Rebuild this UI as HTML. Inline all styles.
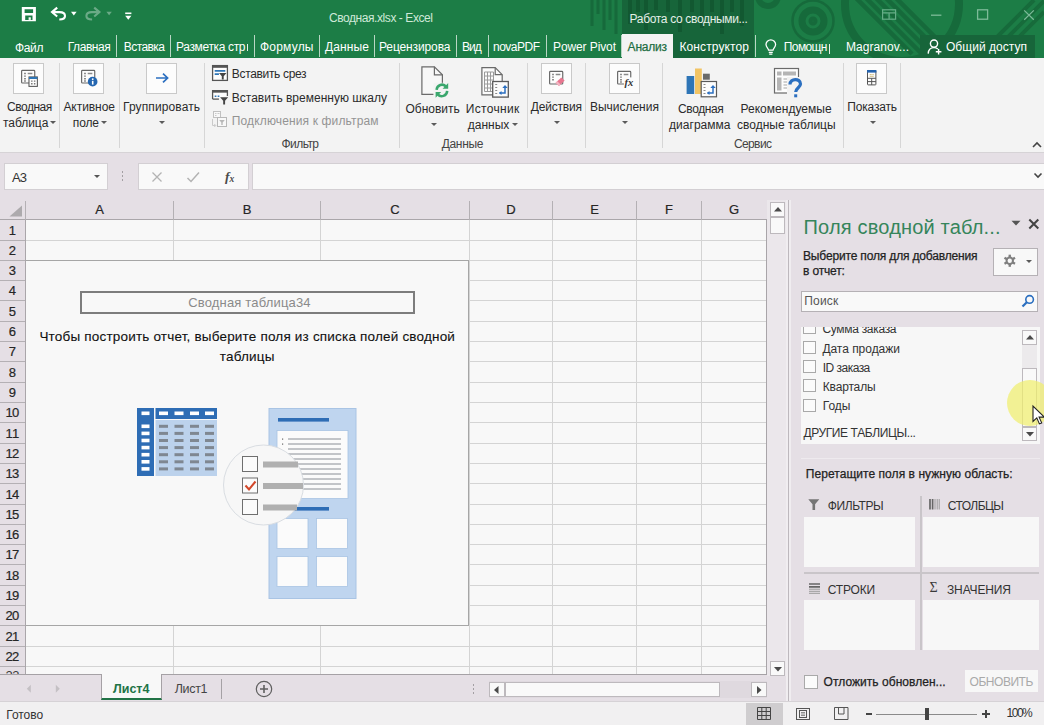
<!DOCTYPE html>
<html lang="ru">
<head>
<meta charset="utf-8">
<title>Сводная.xlsx - Excel</title>
<style>
html,body{margin:0;padding:0;}
body{width:1044px;height:725px;position:relative;overflow:hidden;background:#e5dfe5;font-family:"Liberation Sans",sans-serif;font-size:12px;color:#2b2b2b;}
div,span{box-sizing:border-box;}
.a{position:absolute;}
svg{position:absolute;overflow:visible;}
.t{position:absolute;white-space:nowrap;}
/* title + tabs */
#title{left:0;top:0;width:1044px;height:58px;background:#1c7d46;overflow:hidden;}
#ctx{left:622px;top:0;width:132px;height:58px;background:#17653a;}
#share{left:920px;top:35px;width:115px;height:23px;background:#17653a;}
#tabAct{left:622px;top:34px;width:51px;height:25px;background:#f3f3f3;}
.sep{position:absolute;top:35px;width:1px;height:22px;background:#b9d6c4;}
/* ribbon */
#ribbon{left:0;top:58px;width:1044px;height:94px;background:#f3f3f3;}
#ribline{left:0;top:152px;width:1044px;height:1px;background:#d6d3d6;}
.gsep{position:absolute;top:63px;width:1px;height:85px;background:#d6d6d6;}
.bb{position:absolute;top:63px;width:31px;height:31px;border:1px solid #c9c9c9;background:#fcfcfc;}
.car{position:absolute;width:0;height:0;border-left:3px solid transparent;border-right:3px solid transparent;border-top:3px solid #5a5a5a;}
/* formula bar */
.box{position:absolute;background:#f9f9f9;border:1px solid #d3cfd3;}
/* grid */
#grid{left:0;top:200px;width:767px;height:475px;background:#f8f8f8;overflow:hidden;}
#colhdr{left:0;top:0;width:767px;height:20px;background:#e5dfe5;border-bottom:1px solid #aaa6aa;}
#rowhdr{left:0;top:20px;width:26px;height:460px;background:#e5dfe5;border-right:1px solid #aaa6aa;}
.vl{position:absolute;top:20px;width:1px;height:460px;background:#d4d4d4;}
.hl{position:absolute;left:26px;height:1px;width:742px;background:#d4d4d4;}
.rl{position:absolute;left:0;height:1px;width:25px;background:#b4b0b4;}
.cl{position:absolute;top:1px;width:1px;height:19px;background:#b4b0b4;}
#pv{left:26px;top:60px;width:443px;height:366px;background:#f8f8f8;border:1px solid #a6a6a6;border-left:none;}
/* pane */
.wb{position:absolute;background:#f7f7f7;}
.cb{position:absolute;width:13px;height:13px;border:1px solid #a9a9a9;background:#fbfbfb;}
.sbtn{position:absolute;background:#f9f9f9;border:1px solid #bdb9bd;}
</style>
</head>
<body>
<!-- ================= TITLE BAR ================= -->
<div id="title" class="a">
  <svg width="1044" height="58" viewBox="0 0 1044 58" style="left:0;top:0">
    <defs><clipPath id="bigc"><circle cx="902" cy="4" r="53"/></clipPath></defs>
    <g fill="none" stroke="#16673a" opacity="0.850">
      <path d="M592 0V26M598 0V14M604 0V30M610 0V20M616 0V34" stroke-width="3"/>
      <circle cx="813" cy="21" r="20.500" stroke-width="2.500"/>
      <circle cx="813" cy="21" r="11" stroke-width="7"/>
      <circle cx="813" cy="21" r="2.500" stroke-width="4"/>
      <circle cx="902" cy="4" r="57" stroke-width="8"/>
      <g clip-path="url(#bigc)" stroke-width="4.500">
        <path d="M852 -6L912 54M862 -6L922 54M872 -6L932 54M882 -6L942 54M892 -6L952 54"/>
      </g>
      <path d="M990 44L1034 0M999 46L1044 1M1008 48L1044 12" stroke-width="4"/>
      <circle cx="768" cy="-4" r="10" stroke-width="6"/>
    </g>
  </svg>
</div>
<div id="ctx" class="a"><svg width="132" height="58" viewBox="0 0 132 58" style="left:0;top:0"><g stroke="#125530" stroke-width="4" opacity="0.800"><path d="M8 0V24M16 0V12M24 0V30M34 0V10M46 0V12M58 0V32M70 0V12M80 0V28M90 0V12M100 0V34M110 0V12M120 0V26"/></g></svg></div>
<div id="share" class="a"></div>
<div id="tabAct" class="a"></div>
<!-- quick access -->
<svg width="140" height="26" viewBox="0 0 140 26" style="left:0;top:0">
  <path fill-rule="evenodd" fill="#fff" d="M21.800 7.100h14.100v14.100h-14.100z M24.600 9.200v3.800h8.500v-3.800z M25.200 15.400v4.500h7.300v-4.500z"/>
  <rect x="28.600" y="17.300" width="2.200" height="2.600" fill="#fff"/>
  <g fill="none" stroke="#fff" stroke-width="2.100">
    <path d="M57.200 7.600L52 12.100L57.200 16.500"/>
    <path d="M52 12.100H59.500C63.500 12.100 65 14 65 16C65 18.500 62.500 19.500 59.300 19.500"/>
  </g>
  <path d="M71 11.800h5.600l-2.800 3.600z" fill="#fff"/>
  <g opacity="0.350">
    <g fill="none" stroke="#fff" stroke-width="2.100">
      <path d="M94.200 7.600L99.400 12.100L94.200 16.500"/>
      <path d="M99.400 12.100H91.900C87.900 12.100 86.400 14 86.400 16C86.400 18.500 88.900 19.500 92.100 19.500"/>
    </g>
    <path d="M106.400 11.800h5.400l-2.700 3.400z" fill="#fff"/>
  </g>
  <rect x="125.200" y="12.500" width="6.200" height="1.600" fill="#fff"/>
  <path d="M125.200 15.700h6.200l-3.100 4z" fill="#fff"/>
</svg>
<span class="t" style="left:329.0px;top:10.0px;font-size:12px;line-height:16px;letter-spacing:-0.43px;color:#cfe9d8;">Сводная.xlsx - Excel</span>
<span class="t" style="left:629.6px;top:11.0px;font-size:12px;line-height:16px;letter-spacing:-0.33px;color:#e4efe8;">Работа со сводными...</span>
<!-- window controls -->
<svg width="170" height="24" viewBox="0 0 170 24" style="left:874px;top:4px">
  <g fill="none" stroke="#66ad87" stroke-width="1.200">
    <rect x="8.6" y="5.8" width="13" height="9.4"/>
    <path d="M8.6 8.8h13M15.1 8.8v6.4"/>
  </g>
  <path d="M57 11.2h10.4" stroke="#7dbb99" stroke-width="1.3"/>
  <rect x="103.6" y="5.8" width="10" height="9.4" fill="none" stroke="#7dbb99" stroke-width="1.3"/>
  <path d="M150.2 6.4l9.6 9.4M159.8 6.4l-9.6 9.4" stroke="#7dbb99" stroke-width="1.3"/>
</svg>
<!-- tabs -->
<span class="t" style="left:15.0px;top:40.0px;font-size:12px;line-height:16px;letter-spacing:-0.34px;color:#fff;">Файл</span>
<span class="t" style="left:67.7px;top:39.0px;font-size:12px;line-height:16px;letter-spacing:-0.43px;color:#fff;">Главная</span>
<span class="t" style="left:123.8px;top:39.0px;font-size:12px;line-height:16px;letter-spacing:-0.57px;color:#fff;">Вставка</span>
<span class="t" style="left:176.0px;top:39.0px;font-size:12px;line-height:16px;letter-spacing:-0.35px;color:#fff;">Разметка стр</span>
<span class="t" style="left:260.0px;top:39.0px;font-size:12px;line-height:16px;letter-spacing:0.21px;color:#fff;">Формулы</span>
<span class="t" style="left:325.0px;top:39.0px;font-size:12px;line-height:16px;letter-spacing:0.13px;color:#fff;">Данные</span>
<span class="t" style="left:379.0px;top:39.0px;font-size:12px;line-height:16px;letter-spacing:-0.12px;color:#fff;">Рецензирова</span>
<span class="t" style="left:462.0px;top:39.0px;font-size:12px;line-height:16px;letter-spacing:-1.01px;color:#fff;">Вид</span>
<span class="t" style="left:493.0px;top:39.0px;font-size:12px;line-height:16px;letter-spacing:-0.51px;color:#fff;">novaPDF</span>
<span class="t" style="left:553.0px;top:39.0px;font-size:12px;line-height:16px;letter-spacing:-0.10px;color:#fff;">Power Pivot</span>
<span class="t" style="left:627.6px;top:39.0px;font-size:12px;line-height:16px;letter-spacing:-0.22px;color:#1e6e42;-webkit-text-stroke:0.25px #1e6e42;">Анализ</span>
<span class="t" style="left:679.4px;top:39.0px;font-size:12px;line-height:16px;letter-spacing:0.12px;color:#fff;">Конструктор</span>
<span class="t" style="left:783.8px;top:39.0px;font-size:12px;line-height:16px;letter-spacing:-0.61px;color:#fff;">Помощн</span>
<span class="t" style="left:846.0px;top:39.0px;font-size:12px;line-height:16px;letter-spacing:0.05px;color:#fff;">Magranov...</span>
<span class="t" style="left:946.0px;top:39.0px;font-size:12px;line-height:16px;letter-spacing:0.03px;color:#fff;">Общий доступ</span>
<div class="a" style="left:247px;top:44px;width:1px;height:7px;background:#e6f0ea"></div>
<div class="a" style="left:829px;top:44px;width:1px;height:10px;background:#e6f0ea"></div>
<div class="sep" style="left:116px"></div><div class="sep" style="left:170px"></div><div class="sep" style="left:254px"></div>
<div class="sep" style="left:319px"></div><div class="sep" style="left:374px"></div><div class="sep" style="left:456px"></div>
<div class="sep" style="left:488px"></div><div class="sep" style="left:546px"></div><div class="sep" style="left:621px"></div>
<div class="sep" style="left:755px"></div>
<!-- bulb + person icons -->
<svg width="14" height="18" viewBox="0 0 14 18" style="left:764px;top:38px">
  <path d="M4.6 12.2c0-1.6-2.6-2.9-2.6-5.6a4.8 4.8 0 0 1 9.6 0c0 2.7-2.6 4-2.6 5.6z" fill="none" stroke="#fff" stroke-width="1.3"/>
  <path d="M4.8 14.3h4M5.2 16.2h3.2" stroke="#fff" stroke-width="1.2"/>
</svg>
<svg width="18" height="18" viewBox="0 0 18 18" style="left:926px;top:38px">
  <circle cx="8" cy="5.6" r="3.6" fill="none" stroke="#fff" stroke-width="1.4"/>
  <path d="M2.2 15.6c0.2-4 2.6-6 5.8-6c1.6 0 2.9 0.5 3.9 1.5" fill="none" stroke="#fff" stroke-width="1.4"/>
  <path d="M12.6 11v5.6M9.8 13.8h5.6" stroke="#fff" stroke-width="1.4"/>
</svg>
<!-- ================= RIBBON ================= -->
<div id="ribbon" class="a"></div>
<div id="ribline" class="a"></div>
<div class="gsep" style="left:59px"></div><div class="gsep" style="left:119px"></div><div class="gsep" style="left:204px"></div>
<div class="gsep" style="left:399px"></div><div class="gsep" style="left:527px"></div><div class="gsep" style="left:585px"></div>
<div class="gsep" style="left:662px"></div><div class="gsep" style="left:843px"></div><div class="gsep" style="left:900px"></div>
<div class="bb" style="left:13px"></div><div class="bb" style="left:73px"></div><div class="bb" style="left:146px"></div>
<div class="bb" style="left:541px"></div><div class="bb" style="left:609px"></div><div class="bb" style="left:856px"></div>
<!-- icon: pivot table -->
<svg width="21" height="21" viewBox="0 0 20 20" style="left:19px;top:68px">
  <rect x="2.500" y="2.300" width="12.500" height="12" rx="0.800" fill="#fdfdfd" stroke="#666" stroke-width="1.100"/>
  <path d="M4.800 5.200h1.800M8.300 5.200h4.400M4.800 7.800h1.800M4.800 10.200h1.800M4.800 12.400h1.800" stroke="#8a8a8a" stroke-width="1.300"/>
  <rect x="9.5" y="8.5" width="8" height="9" fill="#fdfdfd" stroke="#555"/>
  <rect x="9.5" y="8.5" width="8" height="2" fill="#2e75b6"/>
  <path d="M11.5 12.5h1.4M14.2 12.5h1.4M11.5 15h1.4M14.2 15h1.4" stroke="#777" stroke-width="1.3"/>
</svg>
<!-- icon: active field -->
<svg width="21" height="21" viewBox="0 0 20 20" style="left:79px;top:68px">
  <rect x="2.500" y="2.300" width="12.500" height="12" rx="0.800" fill="#fdfdfd" stroke="#666" stroke-width="1.100"/>
  <path d="M4.800 5.200h1.800M8.300 5.200h4.400M4.800 7.800h1.800M4.800 10.200h1.800M4.800 12.400h1.800" stroke="#8a8a8a" stroke-width="1.300"/>
  <circle cx="13" cy="13" r="4.600" fill="#2466b0"/>
  <rect x="12.300" y="12.200" width="1.500" height="3.600" fill="#fff"/><rect x="12.300" y="9.900" width="1.500" height="1.500" fill="#fff"/>
</svg>
<!-- icon: group arrow -->
<svg width="16" height="12" viewBox="0 0 16 12" style="left:155px;top:72px">
  <path d="M1 6h11M8 1.6l4.6 4.4l-4.6 4.4" fill="none" stroke="#2b6fc0" stroke-width="1.7"/>
</svg>
<!-- icon: actions (eraser) -->
<svg width="21" height="21" viewBox="0 0 20 20" style="left:547px;top:69px">
  <rect x="2.500" y="2.300" width="12.500" height="12" rx="0.800" fill="#fdfdfd" stroke="#666" stroke-width="1.100"/>
  <path d="M4.800 5.200h1.800M8.300 5.200h4.400M4.800 7.800h1.800M4.800 10.200h1.800" stroke="#8a8a8a" stroke-width="1.300"/>
  <path d="M8.2 13.2l5.4-5.2l3.2 3l-5.4 5.2z" fill="#e8768f"/>
  <path d="M8.2 13.2l1.6-1.5l3.2 3l-1.6 1.5z" fill="#f3b6c3"/>
</svg>
<!-- icon: calculations fx -->
<svg width="21" height="21" viewBox="0 0 20 20" style="left:615px;top:69px">
  <rect x="2.500" y="2.300" width="12.500" height="12" rx="0.800" fill="#fdfdfd" stroke="#666" stroke-width="1.100"/>
  <path d="M4.800 5.200h1.800M8.300 5.200h4.400M4.800 7.800h1.800M4.800 10.200h1.800M4.800 12.400h1.800" stroke="#8a8a8a" stroke-width="1.300"/>
  <rect x="8.500" y="8" width="9" height="9" fill="#fcfcfc"/>
  <text x="9" y="15.800" font-family="Liberation Serif,serif" font-style="italic" font-weight="bold" font-size="10" fill="#333">fx</text>
</svg>
<!-- icon: show -->
<svg width="12" height="18" viewBox="0 0 12 18" style="left:866px;top:69px">
  <rect x="1.500" y="1.500" width="8.400" height="14.400" rx="0.600" fill="#fdfdfd" stroke="#555"/>
  <rect x="1" y="1" width="9.400" height="2.600" fill="#2563ae"/>
  <path d="M3.700 5.600h2M6.300 5.600h1.500M3.700 7.300h4" stroke="#cdb56e" stroke-width="0.900"/>
  <path d="M1.500 9.300h8.400M1.500 12.600h8.400M5.700 9.300v6.600" stroke="#555" stroke-width="1"/>
</svg>
<!-- icon: insert slicer -->
<svg width="18" height="18" viewBox="0 0 17 17" style="left:211px;top:64px">
  <rect x="1.5" y="1.5" width="14" height="14" fill="#fdfdfd" stroke="#555" stroke-width="1.2"/>
  <rect x="1" y="1" width="15" height="2.6" fill="#555"/>
  <path d="M3.5 6.5h10M3.5 9.5h4" stroke="#2e75b6" stroke-width="1.6"/>
  <path d="M7.6 8.6h7l-2.6 3v3h-1.8v-3z" fill="#444"/>
</svg>
<!-- icon: insert timeline -->
<svg width="18" height="18" viewBox="0 0 17 17" style="left:211px;top:88px">
  <path d="M1.5 10.5v-8h14v5" fill="#fdfdfd" stroke="#555" stroke-width="1.2"/>
  <rect x="1" y="2" width="15" height="2.4" fill="#555"/>
  <path d="M3.5 7.8h1.6M6.3 7.8h1.6" stroke="#2e75b6" stroke-width="1.5"/>
  <path d="M1.5 10.5h6" stroke="#555" stroke-width="1.2"/>
  <path d="M8.6 8.8h7.6l-2.9 3.2v3.6h-1.8v-3.6z" fill="#444"/>
</svg>
<!-- icon: filter connections (dim) -->
<svg width="17" height="18" viewBox="0 0 17 18" style="left:211px;top:110px" opacity="0.55">
  <rect x="2.5" y="1.5" width="7" height="6" fill="#fdfdfd" stroke="#999"/>
  <path d="M4 3.5h1.5M6.5 3.5h2M4 5.5h1.5" stroke="#aaa"/>
  <rect x="6.500" y="7.500" width="9" height="9" fill="#fdfdfd" stroke="#888"/>
  <path d="M8.2 10h5.6l-2.100 2.400v2.600h-1.400v-2.600z" fill="#888"/>
  <path d="M1.500 9v6.500h3M3.300 14l1.500 1.500l-1.500 1.500" fill="none" stroke="#aaa"/>
</svg>
<span class="t" style="left:231.8px;top:66.0px;font-size:12px;line-height:16px;letter-spacing:-0.33px;">Вставить срез</span>
<span class="t" style="left:231.8px;top:90.0px;font-size:12px;line-height:16px;letter-spacing:-0.00px;">Вставить временную шкалу</span>
<span class="t" style="left:231.8px;top:113.0px;font-size:12px;line-height:16px;letter-spacing:0.14px;color:#939393;">Подключения к фильтрам</span>
<span class="t" style="left:281.5px;top:136.0px;font-size:12px;line-height:16px;letter-spacing:-0.56px;color:#444;">Фильтр</span>
<!-- big labels -->
<span class="t" style="left:7.0px;top:99.0px;font-size:12px;line-height:16px;letter-spacing:-0.47px;">Сводная</span>
<span class="t" style="left:3.0px;top:115.0px;font-size:12px;line-height:16px;letter-spacing:-0.05px;">таблица</span>
<div class="car" style="left:50px;top:121px"></div>
<span class="t" style="left:63.4px;top:99.0px;font-size:12px;line-height:16px;letter-spacing:-0.05px;">Активное</span>
<span class="t" style="left:72.8px;top:115.0px;font-size:12px;line-height:16px;letter-spacing:-0.13px;">поле</span>
<div class="car" style="left:101px;top:121px"></div>
<span class="t" style="left:123.0px;top:99.0px;font-size:12px;line-height:16px;letter-spacing:0.11px;">Группировать</span>
<div class="car" style="left:159px;top:121px"></div>
<!-- icon: refresh -->
<svg width="34" height="36" viewBox="0 0 34 36" style="left:418px;top:63px">
  <path d="M3.900 3.800h12.500l8 8v19.500h-20.500z" fill="#f7f7f7" stroke="#6a6a6a" stroke-width="1.200"/>
  <path d="M16.400 3.800v8h8" fill="none" stroke="#6a6a6a" stroke-width="1.200"/>
  <g transform="translate(0.400 1.300)">
  <rect x="15" y="18.500" width="17" height="16" fill="#f3f3f3"/>
  <path d="M18.200 25.600a5.400 5.400 0 0 1 9.600-3.200" fill="none" stroke="#3aa76d" stroke-width="2.500"/>
  <path d="M29.800 18.800v5.600h-5.600z" fill="#3aa76d"/>
  <path d="M28.800 26.600a5.400 5.400 0 0 1-9.600 3.200" fill="none" stroke="#3aa76d" stroke-width="2.500"/>
  <path d="M17.200 33.400v-5.600h5.600z" fill="#3aa76d"/>
  </g>
</svg>
<span class="t" style="left:405.5px;top:101.0px;font-size:12px;line-height:16px;letter-spacing:-0.01px;">Обновить</span>
<div class="car" style="left:431px;top:123px"></div>
<!-- icon: data source -->
<svg width="34" height="36" viewBox="0 0 34 36" style="left:478px;top:63px">
  <path d="M3.900 4.700h13.300l7 7v20.100h-20.300z" fill="#fbfbfb" stroke="#6a6a6a" stroke-width="1.200"/>
  <path d="M17.200 4.700v7h7" fill="none" stroke="#6a6a6a" stroke-width="1.200"/>
  <path d="M6.500 9h9v19.500h-9zM6.500 13h9M6.500 17h9M6.500 21h9M6.500 25h9M9.500 9v19.500M12.500 9v19.500" fill="none" stroke="#9a9a9a" stroke-width="1"/>
  <rect x="14.700" y="18.500" width="15.600" height="15.600" fill="#fbfbfb" stroke="#5a5a5a" stroke-width="1.300"/>
  <path d="M17.200 21.500h2M17.200 24.500h2M17.200 27.500h2M17.200 30.500h2" stroke="#8a8a8a" stroke-width="1.200"/>
  <path d="M21.500 30h5.500v-6" fill="none" stroke="#2b6fc0" stroke-width="1.500"/>
  <path d="M24.300 25l2.700-3l2.700 3z" fill="#2b6fc0"/>
  <path d="M23.500 28l-2.600 2l2.600 2z" fill="#2b6fc0"/>
</svg>
<span class="t" style="left:465.8px;top:101.0px;font-size:12px;line-height:16px;letter-spacing:0.32px;">Источник</span>
<span class="t" style="left:467.8px;top:117.0px;font-size:12px;line-height:16px;letter-spacing:-0.01px;">данных</span>
<div class="car" style="left:511.500px;top:123px"></div>
<span class="t" style="left:441.7px;top:136.0px;font-size:12px;line-height:16px;letter-spacing:-0.31px;color:#444;">Данные</span>
<span class="t" style="left:530.8px;top:99.0px;font-size:12px;line-height:16px;letter-spacing:-0.20px;">Действия</span>
<div class="car" style="left:554px;top:121px"></div>
<span class="t" style="left:590.0px;top:99.0px;font-size:12px;line-height:16px;letter-spacing:-0.02px;">Вычисления</span>
<div class="car" style="left:621.500px;top:121px"></div>
<!-- icon: pivot chart -->
<svg width="34" height="34" viewBox="0 0 34 34" style="left:684px;top:64px">
  <rect x="2.600" y="12" width="7.600" height="18" fill="#2e75b6"/>
  <rect x="11" y="4.500" width="6.800" height="25.500" fill="#f2c464"/>
  <rect x="19" y="9.700" width="6.800" height="6" fill="#6a6a6a"/>
  <rect x="17.200" y="17.500" width="15.300" height="15.300" fill="#fdfdfd" stroke="#5a5a5a" stroke-width="1.200"/>
  <path d="M19.500 20.500h2M19.500 23.500h2M19.500 26.500h2M19.500 29.500h2" stroke="#8a8a8a" stroke-width="1.200"/>
  <path d="M23.500 29h5.500v-6" fill="none" stroke="#2b6fc0" stroke-width="1.500"/>
  <path d="M26.300 24l2.700-3l2.700 3z" fill="#2b6fc0"/>
  <path d="M25.500 27l-2.600 2l2.600 2z" fill="#2b6fc0"/>
</svg>
<span class="t" style="left:678.0px;top:101.0px;font-size:12px;line-height:16px;letter-spacing:-0.39px;">Сводная</span>
<span class="t" style="left:669.0px;top:117.0px;font-size:12px;line-height:16px;letter-spacing:0.03px;">диаграмма</span>
<!-- icon: recommended pivots -->
<svg width="34" height="34" viewBox="0 0 34 34" style="left:770px;top:64px">
  <rect x="4.500" y="4.500" width="24" height="24.500" fill="#fdfdfd" stroke="#6a6a6a" stroke-width="1.200"/>
  <rect x="7" y="7.500" width="4.500" height="4" fill="#b5b5b5"/><rect x="13" y="7.500" width="13" height="4" fill="#b5b5b5"/>
  <rect x="7" y="13.500" width="4.500" height="13" fill="#b5b5b5"/>
  <path d="M13.500 15h10M13.500 18h6M13.500 21h5M13.500 24h5" stroke="#a5a5a5" stroke-width="1.200"/>
  <rect x="17" y="13" width="16" height="21" fill="#f3f3f3"/>
  <path d="M20 20.500c0-6.500 10.500-6.500 10.500-0.500c0 3.500-4.800 4-4.800 8" fill="none" stroke="#2b6fc0" stroke-width="3.200"/>
  <rect x="24.200" y="30.300" width="3" height="3" fill="#2b6fc0"/>
</svg>
<span class="t" style="left:740.5px;top:101.0px;font-size:12px;line-height:16px;letter-spacing:0.02px;">Рекомендуемые</span>
<span class="t" style="left:737.0px;top:117.0px;font-size:12px;line-height:16px;letter-spacing:0.01px;">сводные таблицы</span>
<span class="t" style="left:733.9px;top:136.0px;font-size:12px;line-height:16px;letter-spacing:-0.60px;color:#444;">Сервис</span>
<span class="t" style="left:847.3px;top:99.0px;font-size:12px;line-height:16px;letter-spacing:-0.19px;">Показать</span>
<div class="car" style="left:870px;top:121px"></div>
<svg width="10" height="8" viewBox="0 0 10 8" style="left:1032px;top:141px"><path d="M1 6l4-4l4 4" fill="none" stroke="#444" stroke-width="1.600"/></svg>

<!-- ================= FORMULA BAR ================= -->
<div class="box" style="left:4px;top:163px;width:104px;height:27px"></div>
<span class="t" style="left:12.0px;top:170.0px;font-size:13px;line-height:16px;letter-spacing:-0.91px;color:#333;">A3</span>
<div class="car" style="left:93.500px;top:174.500px;border-top-color:#555"></div>
<div class="a" style="left:121.500px;top:171px;width:1.500px;height:1.500px;background:#a39fa3;box-shadow:0 4px 0 #a39fa3,0 8px 0 #a39fa3"></div>
<div class="box" style="left:138px;top:163px;width:111px;height:27px"></div>
<svg width="100" height="14" viewBox="0 0 100 14" style="left:150px;top:170px">
  <path d="M2.500 2.500l9 9M11.500 2.500l-9 9" stroke="#b3b3b3" stroke-width="1.300" fill="none"/>
  <path d="M37.500 8l3.500 3.500l8-9" stroke="#b3b3b3" stroke-width="1.500" fill="none"/>
  <text x="75" y="11" font-family="Liberation Serif,serif" font-style="italic" font-weight="bold" font-size="13.500" fill="#4a4a4a">f</text>
  <text x="79.500" y="12" font-family="Liberation Serif,serif" font-style="italic" font-weight="bold" font-size="9.500" fill="#4a4a4a">x</text>
</svg>
<div class="box" style="left:252px;top:163px;width:800px;height:27px"></div>
<svg width="10" height="8" viewBox="0 0 10 8" style="left:1033px;top:172px"><path d="M1.500 1.500l3.500 3.500l3.500-3.500" fill="none" stroke="#444" stroke-width="1.600"/></svg>

<!-- ================= GRID ================= -->
<div id="grid" class="a">
<div id="colhdr" class="a"></div><div id="rowhdr" class="a"></div>
<div class="cl" style="left:25px"></div>
<div class="vl" style="left:173px"></div>
<div class="cl" style="left:173px"></div>
<div class="vl" style="left:320px"></div>
<div class="cl" style="left:320px"></div>
<div class="vl" style="left:469px"></div>
<div class="cl" style="left:469px"></div>
<div class="vl" style="left:552px"></div>
<div class="cl" style="left:552px"></div>
<div class="vl" style="left:636px"></div>
<div class="cl" style="left:636px"></div>
<div class="vl" style="left:701px"></div>
<div class="cl" style="left:701px"></div>
<div class="vl" style="left:766px"></div>
<div class="hl" style="top:40px"></div>
<div class="rl" style="top:40px"></div>
<div class="hl" style="top:60px"></div>
<div class="rl" style="top:60px"></div>
<div class="hl" style="top:80px"></div>
<div class="rl" style="top:80px"></div>
<div class="hl" style="top:100px"></div>
<div class="rl" style="top:100px"></div>
<div class="hl" style="top:121px"></div>
<div class="rl" style="top:121px"></div>
<div class="hl" style="top:141px"></div>
<div class="rl" style="top:141px"></div>
<div class="hl" style="top:161px"></div>
<div class="rl" style="top:161px"></div>
<div class="hl" style="top:182px"></div>
<div class="rl" style="top:182px"></div>
<div class="hl" style="top:202px"></div>
<div class="rl" style="top:202px"></div>
<div class="hl" style="top:222px"></div>
<div class="rl" style="top:222px"></div>
<div class="hl" style="top:243px"></div>
<div class="rl" style="top:243px"></div>
<div class="hl" style="top:263px"></div>
<div class="rl" style="top:263px"></div>
<div class="hl" style="top:283px"></div>
<div class="rl" style="top:283px"></div>
<div class="hl" style="top:304px"></div>
<div class="rl" style="top:304px"></div>
<div class="hl" style="top:324px"></div>
<div class="rl" style="top:324px"></div>
<div class="hl" style="top:344px"></div>
<div class="rl" style="top:344px"></div>
<div class="hl" style="top:364px"></div>
<div class="rl" style="top:364px"></div>
<div class="hl" style="top:385px"></div>
<div class="rl" style="top:385px"></div>
<div class="hl" style="top:405px"></div>
<div class="rl" style="top:405px"></div>
<div class="hl" style="top:425px"></div>
<div class="rl" style="top:425px"></div>
<div class="hl" style="top:446px"></div>
<div class="rl" style="top:446px"></div>
<div class="hl" style="top:466px"></div>
<div class="rl" style="top:466px"></div>
<div class="hl" style="top:486px"></div>
<div class="rl" style="top:486px"></div>
<div class="a" style="left:766px;top:19px;width:1px;height:460px;background:#a9a5a9"></div>
<svg width="14" height="12" viewBox="0 0 14 12" style="left:9px;top:5px"><path d="M13 0.500v11h-12.500z" fill="#adaaad"/></svg>
<span class="t" style="left:5.500px;top:468px;font-size:13px;line-height:16px;letter-spacing:-0.400px;color:#3a3a3a">23</span>
<div id="pv" class="a"></div>
<div class="a" style="left:80px;top:91px;width:335px;height:23px;border:2px solid #7d7d7d;background:#f8f8f8"></div>
<svg width="232" height="200" viewBox="0 0 232 200" style="left:131px;top:203px">
  <!-- table graphic -->
  <rect x="6" y="5" width="17" height="68" fill="#2e6db5"/>
  <rect x="24.500" y="5" width="61.500" height="11" fill="#2e6db5"/>
  <rect x="24.500" y="17" width="61.500" height="56" fill="#bcd2ec"/>
  <g fill="#fff">
    <rect x="10.500" y="8.500" width="8" height="3.600"/>
    <rect x="10.500" y="21.500" width="8" height="3.600"/><rect x="10.500" y="28.600" width="8" height="3.600"/><rect x="10.500" y="35.700" width="8" height="3.600"/>
    <rect x="10.500" y="42.800" width="8" height="3.600"/><rect x="10.500" y="49.900" width="8" height="3.600"/><rect x="10.500" y="57" width="8" height="3.600"/><rect x="10.500" y="64.100" width="8" height="3.600"/>
    <rect x="28" y="8.500" width="9" height="3.600"/><rect x="43.500" y="8.500" width="9" height="3.600"/><rect x="59" y="8.500" width="9" height="3.600"/><rect x="74" y="8.500" width="9" height="3.600"/>
  </g>
  <g fill="#7f8791">
    <rect x="28" y="21.800" width="9" height="3"/><rect x="43.500" y="21.800" width="9" height="3"/><rect x="59" y="21.800" width="9" height="3"/><rect x="74" y="21.800" width="9" height="3"/>
    <rect x="28" y="28.900" width="9" height="3"/><rect x="43.500" y="28.900" width="9" height="3"/><rect x="59" y="28.900" width="9" height="3"/><rect x="74" y="28.900" width="9" height="3"/>
    <rect x="28" y="36" width="9" height="3"/><rect x="43.500" y="36" width="9" height="3"/><rect x="59" y="36" width="9" height="3"/><rect x="74" y="36" width="9" height="3"/>
    <rect x="28" y="43.100" width="9" height="3"/><rect x="43.500" y="43.100" width="9" height="3"/><rect x="59" y="43.100" width="9" height="3"/><rect x="74" y="43.100" width="9" height="3"/>
    <rect x="28" y="50.200" width="9" height="3"/><rect x="43.500" y="50.200" width="9" height="3"/><rect x="59" y="50.200" width="9" height="3"/><rect x="74" y="50.200" width="9" height="3"/>
    <rect x="28" y="57.300" width="9" height="3"/><rect x="43.500" y="57.300" width="9" height="3"/><rect x="59" y="57.300" width="9" height="3"/><rect x="74" y="57.300" width="9" height="3"/>
    <rect x="28" y="64.400" width="9" height="3"/><rect x="43.500" y="64.400" width="9" height="3"/><rect x="59" y="64.400" width="9" height="3"/><rect x="74" y="64.400" width="9" height="3"/>
  </g>
  <!-- field list pane graphic -->
  <rect x="138" y="5.500" width="87" height="190" fill="#bfd5ef" stroke="#a9c4e4" stroke-width="1"/>
  <rect x="147" y="15" width="51" height="3.600" fill="#2e6db5"/>
  <rect x="146" y="27.500" width="71" height="68" fill="#fbfbfb" stroke="#a9c4e4" stroke-width="0.800"/>
  <g stroke="#8a8f96" stroke-width="1">
    <path d="M157 36h53M157 41h53M157 46h53M157 51h53M157 56h53M157 61h53M157 66h53M157 71h53M157 76h53M157 81h53M157 86h53"/>
  </g>
  <rect x="151" y="35.500" width="1.200" height="1.200" fill="#666"/><rect x="151" y="40.500" width="1.200" height="1.200" fill="#666"/>
  <rect x="160" y="104" width="38" height="3.600" fill="#2e6db5"/>
  <g fill="#fbfbfb" stroke="#a9c4e4" stroke-width="0.800">
    <rect x="146" y="115.500" width="31" height="30"/><rect x="185.500" y="115.500" width="31" height="30"/>
    <rect x="146" y="153.500" width="31" height="30"/><rect x="185.500" y="153.500" width="31" height="30"/>
  </g>
  <!-- magnifier circle -->
  <circle cx="132.500" cy="82" r="40" fill="#f7f7f7" stroke="#d9dde2" stroke-width="1"/>
  <g fill="#fbfbfb" stroke="#6f6f6f" stroke-width="1">
    <rect x="111.500" y="53.500" width="15" height="15"/><rect x="111.500" y="75" width="15" height="15"/><rect x="111.500" y="96.500" width="15" height="15"/>
  </g>
  <g fill="#b0b0b0">
    <rect x="132" y="58.500" width="35" height="6"/><rect x="132" y="80" width="40" height="6"/><rect x="132" y="101.500" width="34" height="6"/>
  </g>
  <path d="M114.500 82.500l3.500 4l6.500-8" fill="none" stroke="#d2472a" stroke-width="2"/>
</svg>

</div>
<span class="t" style="left:95.2px;top:202.0px;font-size:13px;line-height:16px;letter-spacing:0.00px;color:#262626;-webkit-text-stroke:0.2px #262626;">A</span>
<span class="t" style="left:242.7px;top:202.0px;font-size:13px;line-height:16px;letter-spacing:0.00px;color:#262626;-webkit-text-stroke:0.2px #262626;">B</span>
<span class="t" style="left:390.3px;top:202.0px;font-size:13px;line-height:16px;letter-spacing:0.00px;color:#262626;-webkit-text-stroke:0.2px #262626;">C</span>
<span class="t" style="left:506.3px;top:202.0px;font-size:13px;line-height:16px;letter-spacing:0.00px;color:#262626;-webkit-text-stroke:0.2px #262626;">D</span>
<span class="t" style="left:590.2px;top:202.0px;font-size:13px;line-height:16px;letter-spacing:0.00px;color:#262626;-webkit-text-stroke:0.2px #262626;">E</span>
<span class="t" style="left:665.0px;top:202.0px;font-size:13px;line-height:16px;letter-spacing:0.00px;color:#262626;-webkit-text-stroke:0.2px #262626;">F</span>
<span class="t" style="left:728.9px;top:202.0px;font-size:13px;line-height:16px;letter-spacing:0.00px;color:#262626;-webkit-text-stroke:0.2px #262626;">G</span>
<span class="t" style="left:8.8px;top:223.0px;font-size:13px;line-height:16px;letter-spacing:0.00px;color:#262626;-webkit-text-stroke:0.2px #262626;">1</span>
<span class="t" style="left:8.8px;top:243.0px;font-size:13px;line-height:16px;letter-spacing:0.00px;color:#262626;-webkit-text-stroke:0.2px #262626;">2</span>
<span class="t" style="left:8.8px;top:263.0px;font-size:13px;line-height:16px;letter-spacing:0.00px;color:#262626;-webkit-text-stroke:0.2px #262626;">3</span>
<span class="t" style="left:8.8px;top:283.0px;font-size:13px;line-height:16px;letter-spacing:0.00px;color:#262626;-webkit-text-stroke:0.2px #262626;">4</span>
<span class="t" style="left:8.8px;top:304.0px;font-size:13px;line-height:16px;letter-spacing:0.00px;color:#262626;-webkit-text-stroke:0.2px #262626;">5</span>
<span class="t" style="left:8.8px;top:324.0px;font-size:13px;line-height:16px;letter-spacing:0.00px;color:#262626;-webkit-text-stroke:0.2px #262626;">6</span>
<span class="t" style="left:8.8px;top:344.0px;font-size:13px;line-height:16px;letter-spacing:0.00px;color:#262626;-webkit-text-stroke:0.2px #262626;">7</span>
<span class="t" style="left:8.8px;top:365.0px;font-size:13px;line-height:16px;letter-spacing:0.00px;color:#262626;-webkit-text-stroke:0.2px #262626;">8</span>
<span class="t" style="left:8.8px;top:385.0px;font-size:13px;line-height:16px;letter-spacing:0.00px;color:#262626;-webkit-text-stroke:0.2px #262626;">9</span>
<span class="t" style="left:5.6px;top:405.0px;font-size:13px;line-height:16px;letter-spacing:-0.87px;color:#262626;-webkit-text-stroke:0.2px #262626;">10</span>
<span class="t" style="left:5.6px;top:426.0px;font-size:13px;line-height:16px;letter-spacing:0.10px;color:#262626;-webkit-text-stroke:0.2px #262626;">11</span>
<span class="t" style="left:5.6px;top:446.0px;font-size:13px;line-height:16px;letter-spacing:-0.87px;color:#262626;-webkit-text-stroke:0.2px #262626;">12</span>
<span class="t" style="left:5.6px;top:466.0px;font-size:13px;line-height:16px;letter-spacing:-0.87px;color:#262626;-webkit-text-stroke:0.2px #262626;">13</span>
<span class="t" style="left:5.6px;top:487.0px;font-size:13px;line-height:16px;letter-spacing:-0.87px;color:#262626;-webkit-text-stroke:0.2px #262626;">14</span>
<span class="t" style="left:5.6px;top:507.0px;font-size:13px;line-height:16px;letter-spacing:-0.87px;color:#262626;-webkit-text-stroke:0.2px #262626;">15</span>
<span class="t" style="left:5.6px;top:527.0px;font-size:13px;line-height:16px;letter-spacing:-0.87px;color:#262626;-webkit-text-stroke:0.2px #262626;">16</span>
<span class="t" style="left:5.6px;top:547.0px;font-size:13px;line-height:16px;letter-spacing:-0.87px;color:#262626;-webkit-text-stroke:0.2px #262626;">17</span>
<span class="t" style="left:5.6px;top:568.0px;font-size:13px;line-height:16px;letter-spacing:-0.87px;color:#262626;-webkit-text-stroke:0.2px #262626;">18</span>
<span class="t" style="left:5.6px;top:588.0px;font-size:13px;line-height:16px;letter-spacing:-0.87px;color:#262626;-webkit-text-stroke:0.2px #262626;">19</span>
<span class="t" style="left:5.6px;top:608.0px;font-size:13px;line-height:16px;letter-spacing:-0.87px;color:#262626;-webkit-text-stroke:0.2px #262626;">20</span>
<span class="t" style="left:5.6px;top:629.0px;font-size:13px;line-height:16px;letter-spacing:-0.87px;color:#262626;-webkit-text-stroke:0.2px #262626;">21</span>
<span class="t" style="left:5.6px;top:649.0px;font-size:13px;line-height:16px;letter-spacing:-0.87px;color:#262626;-webkit-text-stroke:0.2px #262626;">22</span>
<span class="t" style="left:188.2px;top:295.0px;font-size:13px;line-height:16px;letter-spacing:0.17px;color:#8a8a8a;">Сводная таблица34</span>
<span class="t" style="left:39.4px;top:329.0px;font-size:13.5px;line-height:16px;letter-spacing:0.19px;color:#111;-webkit-text-stroke:0.1px #111;">Чтобы построить отчет, выберите поля из списка полей сводной</span>
<span class="t" style="left:219.8px;top:349.0px;font-size:13.5px;line-height:16px;letter-spacing:0.18px;color:#111;-webkit-text-stroke:0.1px #111;">таблицы</span>

<!-- ================= SCROLLBAR (vertical) ================= -->
<div class="a" style="left:767px;top:200px;width:20px;height:476px;background:#ebe7eb"></div>
<div class="a" style="left:786px;top:200px;width:5px;height:502px;background:#f0edf0"></div>
<div class="a" style="left:788px;top:200px;width:1px;height:502px;background:#bdb8bd"></div>
<div class="sbtn" style="left:770px;top:202px;width:15px;height:15px"></div>
<div class="sbtn" style="left:770px;top:217px;width:15px;height:17px"></div>
<div class="sbtn" style="left:770px;top:661px;width:15px;height:15px"></div>
<svg width="8" height="5" viewBox="0 0 8 5" style="left:773.500px;top:207px"><path d="M0 4.500h8l-4-4.500z" fill="#4a4a4a"/></svg>
<svg width="8" height="5" viewBox="0 0 8 5" style="left:773.500px;top:666.500px"><path d="M0 0h8l-4 4.500z" fill="#4a4a4a"/></svg>
<!-- ================= FIELD LIST PANE ================= -->
<span class="t" style="left:803.5px;top:213.0px;font-size:20px;line-height:28px;letter-spacing:0.18px;color:#35855b;">Поля сводной табл...</span>
<svg width="30" height="14" viewBox="0 0 30 14" style="left:1010px;top:217px">
  <path d="M1.500 3.800h9l-4.500 4.700z" fill="#555"/>
  <path d="M19.300 2.500l9 9M28.300 2.500l-9 9" stroke="#444" stroke-width="2" fill="none"/>
</svg>
<span class="t" style="left:803.0px;top:248.0px;font-size:12px;line-height:16px;letter-spacing:-0.16px;color:#222;-webkit-text-stroke:0.25px #222;">Выберите поля для добавления</span>
<span class="t" style="left:803.0px;top:263.0px;font-size:12px;line-height:16px;letter-spacing:-0.15px;color:#222;-webkit-text-stroke:0.25px #222;">в отчет:</span>
<div class="a" style="left:993px;top:248px;width:45px;height:28px;background:#f8f8f8;border:1px solid #b5b1b5"></div>
<svg width="13.500" height="13.500" viewBox="0 0 16 16" style="left:1003.400px;top:254.400px">
  <g fill="#7f7f7f">
    <rect x="6.600" y="0.800" width="2.800" height="14.400"/>
    <rect x="6.600" y="0.800" width="2.800" height="14.400" transform="rotate(60 8 8)"/>
    <rect x="6.600" y="0.800" width="2.800" height="14.400" transform="rotate(120 8 8)"/>
    <circle cx="8" cy="8" r="5"/>
  </g>
  <circle cx="8" cy="8" r="2.600" fill="#f8f8f8"/>
</svg>
<div class="car" style="left:1026px;top:260px"></div>
<div class="a" style="left:801px;top:291px;width:237px;height:21px;background:#f9f9f9;border:1px solid #b5b1b5"></div>
<span class="t" style="left:804.3px;top:293.0px;font-size:12px;line-height:16px;letter-spacing:0.18px;color:#555;">Поиск</span>
<svg width="14" height="14" viewBox="0 0 14 14" style="left:1021px;top:294px">
  <circle cx="8.600" cy="5.400" r="3.800" fill="none" stroke="#2b6fc0" stroke-width="1.600"/>
  <path d="M5.800 8.200l-4.300 4.300" stroke="#2b6fc0" stroke-width="2.200"/>
</svg>
<!-- list -->
<div class="a" style="left:801px;top:327px;width:239px;height:117px;background:#f7f7f7;overflow:hidden">
  <div class="cb" style="left:2px;top:-6px"></div>
  <div class="cb" style="left:2px;top:14px"></div>
  <div class="cb" style="left:2px;top:33px"></div>
  <div class="cb" style="left:2px;top:52px"></div>
  <div class="cb" style="left:2px;top:72px"></div>
  <div class="a" style="left:221px;top:3px;width:15px;height:111px;background:#eceaec"></div>
  <div class="sbtn" style="left:221px;top:3px;width:15px;height:15px"></div>
  <div class="sbtn" style="left:221px;top:41px;width:15px;height:59px"></div>
  <div class="sbtn" style="left:221px;top:100px;width:15px;height:14px"></div>
  <svg width="8" height="5" viewBox="0 0 8 5" style="left:224.500px;top:8px"><path d="M0 4.500h8l-4-4.500z" fill="#4a4a4a"/></svg>
  <svg width="8" height="5" viewBox="0 0 8 5" style="left:224.500px;top:105px"><path d="M0 0h8l-4 4.500z" fill="#4a4a4a"/></svg>
</div>
<div class="a" style="left:801px;top:327px;width:215px;height:10px;overflow:hidden">
<span class="t" style="left:21.400px;top:-6px;font-size:12px;line-height:16px;letter-spacing:-0.300px;color:#333">Сумма заказа</span>
</div>
<span class="t" style="left:822.4px;top:341.0px;font-size:12px;line-height:16px;letter-spacing:-0.03px;color:#333;">Дата продажи</span>
<span class="t" style="left:822.8px;top:360.0px;font-size:12px;line-height:16px;letter-spacing:-0.53px;color:#333;">ID заказа</span>
<span class="t" style="left:822.8px;top:379.0px;font-size:12px;line-height:16px;letter-spacing:-0.17px;color:#333;">Кварталы</span>
<span class="t" style="left:822.8px;top:398.0px;font-size:12px;line-height:16px;letter-spacing:-0.08px;color:#333;">Годы</span>
<span class="t" style="left:803.4px;top:425.0px;font-size:12px;line-height:16px;letter-spacing:-0.39px;color:#333;">ДРУГИЕ ТАБЛИЦЫ...</span>
<!-- drag area -->
<div class="a" style="left:801px;top:458px;width:239px;height:1px;background:#eeeaee"></div>
<span class="t" style="left:805.8px;top:466.0px;font-size:12px;line-height:16px;letter-spacing:0.05px;color:#222;-webkit-text-stroke:0.25px #222;">Перетащите поля в нужную область:</span>
<div class="a" style="left:920px;top:496px;width:2px;height:154px;background:#c9c5c9"></div>
<div class="a" style="left:804px;top:572px;width:235px;height:2px;background:#c9c5c9"></div>
<div class="wb" style="left:804px;top:517px;width:111px;height:50px"></div>
<div class="wb" style="left:923px;top:517px;width:116px;height:50px"></div>
<div class="wb" style="left:804px;top:600px;width:111px;height:50px"></div>
<div class="wb" style="left:923px;top:600px;width:116px;height:50px"></div>
<svg width="12" height="12" viewBox="0 0 12 12" style="left:808px;top:498.500px"><path d="M0.300 0.300h11l-4.200 5v5.700h-2.600v-5.700z" fill="#757575"/></svg>
<span class="t" style="left:827.7px;top:498.0px;font-size:12px;line-height:16px;letter-spacing:-0.38px;color:#333;">ФИЛЬТРЫ</span>
<svg width="11" height="11" viewBox="0 0 11 11" style="left:928.500px;top:499px"><path d="M1 0v10.500M3.600 0v10.500" stroke="#666" stroke-width="1.700"/><path d="M6 0v10.500M8.200 0v10.500M10.200 0v10.500" stroke="#9a9a9a" stroke-width="1"/></svg>
<span class="t" style="left:947.7px;top:498.0px;font-size:12px;line-height:16px;letter-spacing:-0.54px;color:#333;">СТОЛБЦЫ</span>
<svg width="12" height="11" viewBox="0 0 12 11" style="left:809px;top:582.500px"><path d="M0 1h11M0 3.800h11" stroke="#666" stroke-width="1.700"/><path d="M0 6.200h11M0 8.300h11M0 10.300h11" stroke="#9a9a9a" stroke-width="1"/></svg>
<span class="t" style="left:827.7px;top:582.0px;font-size:12px;line-height:16px;letter-spacing:-0.16px;color:#333;">СТРОКИ</span>
<span class="t" style="left:929.500px;top:580px;font-size:14px;line-height:16px;color:#3a3a3a;font-family:'Liberation Serif',serif">Σ</span>
<span class="t" style="left:947.0px;top:582.0px;font-size:12px;line-height:16px;letter-spacing:-0.14px;color:#333;">ЗНАЧЕНИЯ</span>
<div class="cb" style="left:804px;top:674.500px;width:14px;height:14px"></div>
<span class="t" style="left:823.6px;top:674.0px;font-size:12px;line-height:16px;letter-spacing:0.04px;color:#222;-webkit-text-stroke:0.25px #222;">Отложить обновлен...</span>
<div class="a" style="left:965px;top:670px;width:73px;height:22px;background:#f7f7f7"></div>
<span class="t" style="left:969.6px;top:674.0px;font-size:12px;line-height:16px;letter-spacing:-0.48px;color:#a9a9a9;">ОБНОВИТЬ</span>
<!-- cursor highlight -->
<div class="a" style="left:1007px;top:380px;width:46px;height:46px;border-radius:50%;background:rgba(240,238,110,0.720)"></div>
<svg width="14" height="20" viewBox="0 0 14 20" style="left:1032px;top:405px">
  <path d="M1 1v15.500l3.800-3.600l2.600 6l2.300-1l-2.600-5.800h5.300z" fill="#fff" stroke="#222" stroke-width="1.100"/>
</svg>

<!-- ================= SHEET TABS ================= -->
<div class="a" style="left:0;top:674px;width:767px;height:1px;background:#a5a1a5"></div>
<div class="a" style="left:101px;top:674px;width:61px;height:26px;background:#f8f8f8;border-left:1px solid #a5a1a5;border-right:1px solid #a5a1a5;border-bottom:2px solid #217346"></div>
<span class="t" style="left:113.0px;top:681.0px;font-size:12.5px;line-height:16px;letter-spacing:-0.02px;color:#217346;font-weight:bold;">Лист4</span>
<span class="t" style="left:174.7px;top:681.0px;font-size:12.5px;line-height:16px;letter-spacing:-0.33px;color:#444;">Лист1</span>
<div class="a" style="left:221px;top:679px;width:1px;height:20px;background:#a5a1a5"></div>
<svg width="40" height="10" viewBox="0 0 40 10" style="left:25px;top:683.500px"><path d="M5.800 0.800l-4 4l4 4z" fill="#c4c0c4"/><path d="M30.800 0.800l4 4l-4 4z" fill="#c4c0c4"/></svg>
<svg width="18" height="18" viewBox="0 0 18 18" style="left:254.500px;top:679.500px"><circle cx="9" cy="9" r="7.700" fill="none" stroke="#5f5f5f" stroke-width="1.200"/><path d="M9 5v8M5 9h8" stroke="#5f5f5f" stroke-width="1.600"/></svg>
<div class="a" style="left:472.500px;top:684px;width:1.500px;height:1.500px;background:#a39fa3;box-shadow:0 4px 0 #a39fa3,0 8px 0 #a39fa3"></div>
<!-- h scrollbar -->
<div class="a" style="left:489px;top:681px;width:278px;height:17px;background:#dfd9df"></div>
<div class="sbtn" style="left:489px;top:682px;width:16px;height:15px"></div>
<div class="sbtn" style="left:505px;top:682px;width:215px;height:15px"></div>
<div class="sbtn" style="left:751px;top:682px;width:16px;height:15px"></div>
<svg width="5" height="8" viewBox="0 0 5 8" style="left:494px;top:685.500px"><path d="M4.500 0v8l-4.500-4z" fill="#4a4a4a"/></svg>
<svg width="5" height="8" viewBox="0 0 5 8" style="left:757px;top:685.500px"><path d="M0 0v8l4.500-4z" fill="#4a4a4a"/></svg>
<!-- ================= STATUS BAR ================= -->
<div class="a" style="left:0;top:701px;width:1044px;height:24px;background:#f1f0f1;border-top:1px solid #d6d2d6"></div>
<span class="t" style="left:6.3px;top:707.0px;font-size:12px;line-height:16px;letter-spacing:-0.05px;color:#333;">Готово</span>
<div class="a" style="left:746px;top:703px;width:37px;height:22px;background:#cfcdcf"></div>
<svg width="14" height="13" viewBox="0 0 14 13" style="left:757px;top:707px"><path d="M0.500 0.500h13v12h-13zM0.500 4.500h13M0.500 8.500h13M4.800 0.500v12M9.200 0.500v12" fill="none" stroke="#444" stroke-width="1"/></svg>
<svg width="15" height="12" viewBox="0 0 15 12" style="left:796px;top:708px"><rect x="0.500" y="0.500" width="13" height="11" fill="none" stroke="#555"/><rect x="3.500" y="2.500" width="7" height="7" fill="none" stroke="#555"/><path d="M5 4.500h4M5 6h4M5 7.500h4" stroke="#777" stroke-width="0.800"/></svg>
<svg width="15" height="13" viewBox="0 0 15 13" style="left:834px;top:706.500px"><path d="M0.500 0.500h13.500v12h-13.500z" fill="none" stroke="#555"/><path d="M4.500 0.500v6.500h5.500v-6.500" fill="none" stroke="#555"/></svg>
<div class="a" style="left:866px;top:713px;width:6px;height:2px;background:#444"></div>
<div class="a" style="left:876px;top:713.500px;width:101px;height:1px;background:#8a8a8a"></div>
<div class="a" style="left:925px;top:708px;width:4px;height:12px;background:#444"></div>
<div class="a" style="left:981.500px;top:713px;width:8px;height:2px;background:#444"></div>
<div class="a" style="left:984.500px;top:710px;width:2px;height:8px;background:#444"></div>
<span class="t" style="left:1006.5px;top:705.0px;font-size:12px;line-height:16px;letter-spacing:-1.47px;color:#333;">100%</span>

</body>
</html>
